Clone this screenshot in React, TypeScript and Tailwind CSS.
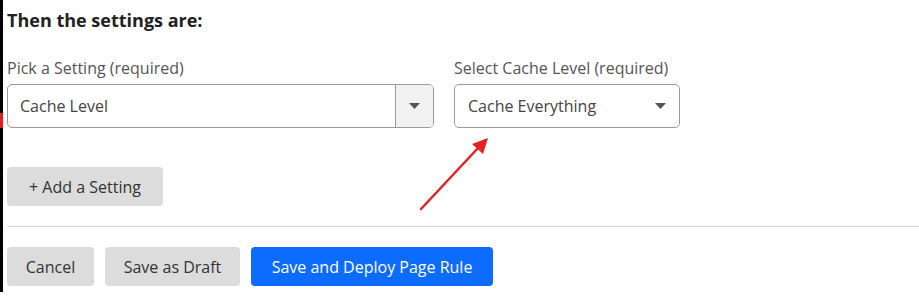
import React from "react";

function Caret() {
  return (
    <svg width="11" height="6" viewBox="0 0 11 6">
      <path d="M0 0 L11 0 L5.5 6 Z" fill="#555" />
    </svg>
  );
}

export default function App() {
  return (
    <div
      className="relative w-[919px] h-[307px] bg-white flex overflow-hidden"
      style={{ fontFamily: '"Open Sans", "Noto Sans", sans-serif' }}
    >
      <div className="w-[3px] h-[292px] bg-black flex flex-col shrink-0">
        <div className="h-[113px]" />
        <div className="h-[15px] bg-[#e01e1e]" />
      </div>
      <div className="flex-1 pl-[4px] flex flex-col">
        <div className="mt-[8px] text-[18px] leading-[24px] font-bold text-[#222]">
          Then the settings are:
        </div>
        <div className="mt-[25px] flex gap-[20px]">
          <div className="flex flex-col w-[427px]">
            <div className="text-[16px] leading-[22px] text-[#555]">Pick a Setting (required)</div>
            <div className="mt-[5px] h-[44px] border border-[#9a9a9a] rounded-[5px] flex overflow-hidden">
              <div className="flex-1 flex items-center pl-[12px] text-[16px] text-[#444]">Cache Level</div>
              <div className="w-[38px] border-l border-[#9a9a9a] bg-[#f1f1f1] flex items-center justify-center">
                <Caret />
              </div>
            </div>
          </div>
          <div className="flex flex-col w-[226px]">
            <div className="text-[16px] leading-[22px] text-[#555]">Select Cache Level (required)</div>
            <div className="mt-[5px] h-[44px] border border-[#9a9a9a] rounded-[5px] flex items-center justify-between pl-[13px] pr-[13px]">
              <span className="text-[16px] text-[#444]">Cache Everything</span>
              <Caret />
            </div>
          </div>
        </div>
        <div className="mt-[39px]">
          <button className="h-[39px] w-[156px] rounded-[4px] bg-[#dcdcdc] text-[16px] text-[#333]">
            + Add a Setting
          </button>
        </div>
        <div className="mt-[20px] h-px bg-[#d6d6d6]" />
        <div className="mt-[20px] flex gap-[11px]">
          <button className="h-[39px] w-[87px] rounded-[4px] bg-[#dcdcdc] text-[16px] text-[#333]">Cancel</button>
          <button className="h-[39px] w-[135px] rounded-[4px] bg-[#dcdcdc] text-[16px] text-[#333]">Save as Draft</button>
          <button className="h-[39px] w-[242px] rounded-[4px] bg-[#0b6cff] text-[16px] text-white">
            Save and Deploy Page Rule
          </button>
        </div>
      </div>
      <svg className="absolute left-0 top-0 pointer-events-none" width="919" height="307">
        <line x1="421" y1="209" x2="479" y2="147" stroke="#e42222" strokeWidth="2.5" strokeLinecap="round" />
        <path d="M488 138 L483 154 L472 144 Z" fill="#e42222" />
      </svg>
    </div>
  );
}
